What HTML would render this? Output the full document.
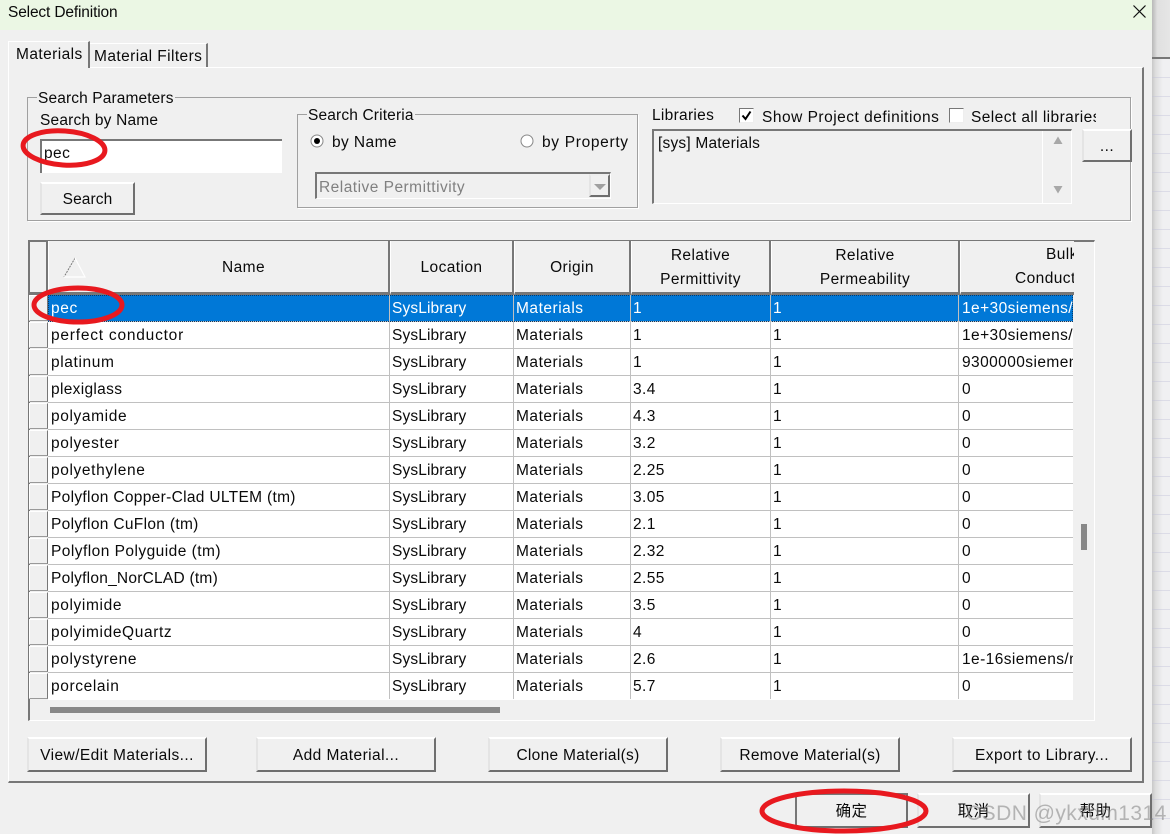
<!DOCTYPE html>
<html><head><meta charset="utf-8"><style>
html,body{margin:0;padding:0}
body{width:1170px;height:834px;overflow:hidden;background:#f0f0f0;position:relative;font:15.5px/20px "Liberation Sans","Noto Sans CJK SC",sans-serif;color:#0a0a0a;letter-spacing:.42px}
div,span{position:absolute;box-sizing:border-box;white-space:nowrap}
.l{border:1px solid #a0a0a0;box-shadow:1px 1px 0 #fff}
.lg{background:#f0f0f0;padding:0 1px;line-height:16px;letter-spacing:.12px}
.btn{background:#f0f0f0;border-top:2px solid #fff;border-left:2px solid #e4e4e4;border-right:2px solid #6f6f6f;border-bottom:2px solid #6f6f6f;text-align:center}
.h{background:#f0f0f0;border-right:2px solid #777;border-bottom:3px solid #777;border-left:1px solid #fff;top:241px;height:54px;text-align:center;line-height:24px;padding-top:3px}
.one{line-height:48px;padding-top:3px}
.row{left:48px;width:1025px;height:27px;background:#fff;border-bottom:1px solid #c0c0c0}
.row span{top:3px;line-height:22px}
.a{left:3px;letter-spacing:.62px}.b{left:344px;letter-spacing:.12px}.c{left:468px;letter-spacing:.52px}.d{left:585px}.e{left:725px}.f{left:914px;width:111px;overflow:hidden}
.v{width:1px;background:#c0c0c0;top:295px;height:404px}
.rh{left:29px;width:19px;height:26px;background:#f0f0f0;border:1px solid #fff;border-right:1px solid #777;border-bottom:1px solid #999}
.sel{background:#0078d7;color:#fff}
</style></head><body>
<!-- right background -->
<div style="left:1152px;top:59px;width:18px;height:775px;background:repeating-linear-gradient(180deg,transparent 0,transparent 18px,rgba(190,190,215,.4) 18px,rgba(190,190,215,.4) 19px),linear-gradient(90deg,#c8c8c8,#dedede 20%,#f0f0f2 60%)"></div>
<div style="left:1152px;top:57px;width:18px;height:2px;background:#777"></div>
<div style="left:1152px;top:0;width:18px;height:57px;background:linear-gradient(90deg,#b8b8b8,#e0e0e0 30%,#e6e6e6)"></div>
<!-- title -->
<div style="left:0;top:0;width:1152px;height:30px;background:#ebf7e4"></div>
<div style="left:8px;top:2px;line-height:22px;letter-spacing:-.15px">Select Definition</div>
<svg style="position:absolute;left:1132px;top:4px" width="15" height="15"><path d="M1.5 1.5L13.5 13.5M13.5 1.5L1.5 13.5" stroke="#111" stroke-width="1.2"/></svg>
<!-- tab pane -->
<div style="left:8px;top:67px;width:1136px;height:716px;border-top:1px solid #fff;border-left:1px solid #fff;border-right:2px solid #777;border-bottom:2px solid #777"></div>
<div style="left:8px;top:41px;width:82px;height:27px;background:#f0f0f0;border-top:1px solid #fff;border-left:1px solid #fff;border-right:2px solid #777;padding-left:7px;line-height:26px">Materials</div>
<div style="left:90px;top:43px;width:118px;height:24px;background:#f0f0f0;border-top:1px solid #fff;border-right:2px solid #777;padding-left:4px;line-height:26px">Material Filters</div>
<!-- search parameters -->
<div class="l" style="left:27px;top:97px;width:1104px;height:124px"></div>
<div class="lg" style="left:37px;top:90px;height:17px;line-height:18px">Search Parameters</div>
<div style="left:40px;top:110px;line-height:22px;letter-spacing:.2px">Search by Name</div>
<div style="left:40px;top:139px;width:242px;height:34px;background:#fff;border-top:2px solid #777;border-left:2px solid #777;padding:2px 2px;line-height:22px">pec</div>
<div class="btn" style="left:40px;top:182px;width:95px;height:33px;line-height:31px;letter-spacing:.1px">Search</div>
<!-- criteria -->
<div class="l" style="left:297px;top:114px;width:341px;height:94px"></div>
<div class="lg" style="left:307px;top:107px;height:17px;line-height:18px;letter-spacing:.15px">Search Criteria</div>
<svg style="position:absolute;left:310px;top:134px" width="15" height="15"><circle cx="7" cy="7" r="6" fill="#fff" stroke="#888"/><circle cx="7" cy="7" r="3" fill="#000"/></svg>
<div style="left:332px;top:132px;line-height:22px">by Name</div>
<svg style="position:absolute;left:520px;top:134px" width="15" height="15"><circle cx="7" cy="7" r="6" fill="#fff" stroke="#888"/></svg>
<div style="left:542px;top:132px;line-height:22px;letter-spacing:.68px">by Property</div>
<div style="left:315px;top:172px;width:296px;height:27px;border-top:2px solid #777;border-left:2px solid #777;border-right:1px solid #fff;border-bottom:1px solid #fff;color:#808080;padding:2px 2px;line-height:24px;letter-spacing:.48px">Relative Permittivity</div>
<div class="btn" style="left:589px;top:174px;width:21px;height:23px;border-top-color:#eee"></div>
<svg style="position:absolute;left:593px;top:183px" width="14" height="8"><path d="M1 1H13L7 7Z" fill="#a0a0a0"/></svg>
<!-- libraries -->
<div style="left:652px;top:105px;line-height:22px;letter-spacing:.3px">Libraries</div>
<div style="left:739px;top:108px;width:15px;height:15px;background:#fff;border:1px solid #777;border-right-color:#eee;border-bottom-color:#eee"></div>
<svg style="position:absolute;left:740px;top:109px" width="14" height="14"><path d="M2.5 6.5L5.5 10L10.5 2.5" stroke="#000" stroke-width="2" fill="none"/></svg>
<div style="left:762px;top:107px;line-height:22px;letter-spacing:.5px">Show Project definitions</div>
<div style="left:949px;top:108px;width:15px;height:15px;background:#fff;border:1px solid #777;border-right-color:#eee;border-bottom-color:#eee"></div>
<div style="left:971px;top:107px;width:125px;overflow:hidden;line-height:22px">Select all libraries</div>
<div style="left:652px;top:129px;width:420px;height:75px;border-top:2px solid #777;border-left:2px solid #777;border-right:1px solid #fff;border-bottom:1px solid #fff;padding:2px 4px;line-height:22px;letter-spacing:.2px">[sys] Materials</div>
<div style="left:1042px;top:131px;width:1px;height:72px;background:#fff"></div>
<svg style="position:absolute;left:1051px;top:135px" width="14" height="60"><path d="M2.5 9H11.5L7 1.5Z M2.5 51H11.5L7 58.5Z" fill="#a8a8a8"/></svg>
<div class="btn" style="left:1082px;top:129px;width:50px;height:33px;line-height:32px">...</div>
<!-- table frame -->
<div style="left:28px;top:240px;width:1067px;height:481px;border-top:2px solid #777;border-left:2px solid #777;border-right:1px solid #fff;border-bottom:1px solid #fff"></div>
<div style="left:30px;top:242px;width:18px;height:53px;background:#f0f0f0;border-right:2px solid #777;border-bottom:3px solid #777"></div>
<div class="h one" style="left:48px;width:342px;padding-left:50px">Name</div>
<svg style="position:absolute;left:62px;top:256px" width="24" height="24"><path d="M13 2L2 21" stroke="#777" fill="none" stroke-dasharray="2 1"/><path d="M13 2L23 21H2" stroke="#fff" stroke-width="1.2" fill="none"/></svg>
<div class="h one" style="left:390px;width:124px">Location</div>
<div class="h one" style="left:514px;width:117px">Origin</div>
<div class="h" style="left:631px;width:140px">Relative<br>Permittivity</div>
<div class="h" style="left:771px;width:189px">Relative<br>Permeability</div>
<div class="h" style="left:960px;width:114px;text-align:left;border-right:0;overflow:hidden"><span style="left:85px;top:2px">Bulk</span><span style="left:54px;top:26px">Conducti</span></div>
<!-- rows -->
<div class="row sel" style="top:295px;outline:1px dotted #0a3a66;outline-offset:-1px;width:1025px"><span class="a">pec</span><span class="b">SysLibrary</span><span class="c">Materials</span><span class="d">1</span><span class="e">1</span><span class="f">1e+30siemens/m</span></div>
<div class="row" style="top:322px"><span class="a" style="letter-spacing:.78px">perfect conductor</span><span class="b">SysLibrary</span><span class="c">Materials</span><span class="d">1</span><span class="e">1</span><span class="f">1e+30siemens/m</span></div>
<div class="row" style="top:349px"><span class="a">platinum</span><span class="b">SysLibrary</span><span class="c">Materials</span><span class="d">1</span><span class="e">1</span><span class="f">9300000siemens/m</span></div>
<div class="row" style="top:376px"><span class="a" style="letter-spacing:.32px">plexiglass</span><span class="b">SysLibrary</span><span class="c">Materials</span><span class="d">3.4</span><span class="e">1</span><span class="f">0</span></div>
<div class="row" style="top:403px"><span class="a">polyamide</span><span class="b">SysLibrary</span><span class="c">Materials</span><span class="d">4.3</span><span class="e">1</span><span class="f">0</span></div>
<div class="row" style="top:430px"><span class="a">polyester</span><span class="b">SysLibrary</span><span class="c">Materials</span><span class="d">3.2</span><span class="e">1</span><span class="f">0</span></div>
<div class="row" style="top:457px"><span class="a">polyethylene</span><span class="b">SysLibrary</span><span class="c">Materials</span><span class="d">2.25</span><span class="e">1</span><span class="f">0</span></div>
<div class="row" style="top:484px"><span class="a" style="letter-spacing:.32px">Polyflon Copper-Clad ULTEM (tm)</span><span class="b">SysLibrary</span><span class="c">Materials</span><span class="d">3.05</span><span class="e">1</span><span class="f">0</span></div>
<div class="row" style="top:511px"><span class="a" style="letter-spacing:.32px">Polyflon CuFlon (tm)</span><span class="b">SysLibrary</span><span class="c">Materials</span><span class="d">2.1</span><span class="e">1</span><span class="f">0</span></div>
<div class="row" style="top:538px"><span class="a" style="letter-spacing:.46px">Polyflon Polyguide (tm)</span><span class="b">SysLibrary</span><span class="c">Materials</span><span class="d">2.32</span><span class="e">1</span><span class="f">0</span></div>
<div class="row" style="top:565px"><span class="a" style="letter-spacing:.24px">Polyflon_NorCLAD (tm)</span><span class="b">SysLibrary</span><span class="c">Materials</span><span class="d">2.55</span><span class="e">1</span><span class="f">0</span></div>
<div class="row" style="top:592px"><span class="a">polyimide</span><span class="b">SysLibrary</span><span class="c">Materials</span><span class="d">3.5</span><span class="e">1</span><span class="f">0</span></div>
<div class="row" style="top:619px"><span class="a">polyimideQuartz</span><span class="b">SysLibrary</span><span class="c">Materials</span><span class="d">4</span><span class="e">1</span><span class="f">0</span></div>
<div class="row" style="top:646px"><span class="a">polystyrene</span><span class="b">SysLibrary</span><span class="c">Materials</span><span class="d">2.6</span><span class="e">1</span><span class="f">1e-16siemens/m</span></div>
<div class="row" style="top:673px;height:27px;border-bottom:0"><span class="a">porcelain</span><span class="b">SysLibrary</span><span class="c">Materials</span><span class="d">5.7</span><span class="e">1</span><span class="f">0</span></div>
<div class="v" style="left:389px"></div><div class="v" style="left:513px"></div><div class="v" style="left:630px"></div><div class="v" style="left:770px"></div><div class="v" style="left:958px"></div>
<div class="rh" style="top:295px"></div><div class="rh" style="top:322px"></div><div class="rh" style="top:349px"></div><div class="rh" style="top:376px"></div><div class="rh" style="top:403px"></div><div class="rh" style="top:430px"></div><div class="rh" style="top:457px"></div><div class="rh" style="top:484px"></div><div class="rh" style="top:511px"></div><div class="rh" style="top:538px"></div><div class="rh" style="top:565px"></div><div class="rh" style="top:592px"></div><div class="rh" style="top:619px"></div><div class="rh" style="top:646px"></div><div class="rh" style="top:673px"></div>
<div style="left:50px;top:707px;width:450px;height:6px;background:#888"></div>
<div style="left:1081px;top:524px;width:6px;height:26px;background:#888"></div>
<!-- bottom buttons -->
<div class="btn" style="left:27px;top:737px;width:180px;height:35px;line-height:33px">View/Edit Materials...</div>
<div class="btn" style="left:256px;top:737px;width:180px;height:35px;line-height:33px">Add Material...</div>
<div class="btn" style="left:488px;top:737px;width:180px;height:35px;line-height:33px;letter-spacing:.3px">Clone Material(s)</div>
<div class="btn" style="left:720px;top:737px;width:180px;height:35px;line-height:33px;letter-spacing:.34px">Remove Material(s)</div>
<div class="btn" style="left:952px;top:737px;width:180px;height:35px;line-height:33px">Export to Library...</div>
<div class="btn" style="left:795px;top:793px;width:113px;height:35px;line-height:34px;border-left:2px solid #777;border-top:2px solid #777">确定</div>
<div class="btn" style="left:917px;top:793px;width:113px;height:35px;line-height:34px">取消</div>
<div class="btn" style="left:1039px;top:793px;width:113px;height:35px;line-height:34px">帮助</div>
<!-- watermark -->
<div style="left:966px;top:800px;font-size:21px;line-height:28px;letter-spacing:.45px;color:rgba(130,130,130,.55)">CSDN @ykxdm1314</div>
<!-- red ellipses -->
<svg style="position:absolute;left:0;top:0" width="1170" height="834" fill="none" stroke="#e8191f" stroke-width="5">
<ellipse cx="64" cy="148" rx="41" ry="17" transform="rotate(4 64 148)"/>
<ellipse cx="78" cy="305" rx="44" ry="17"/>
<ellipse cx="844" cy="811" rx="82" ry="20"/>
</svg>
</body></html>
